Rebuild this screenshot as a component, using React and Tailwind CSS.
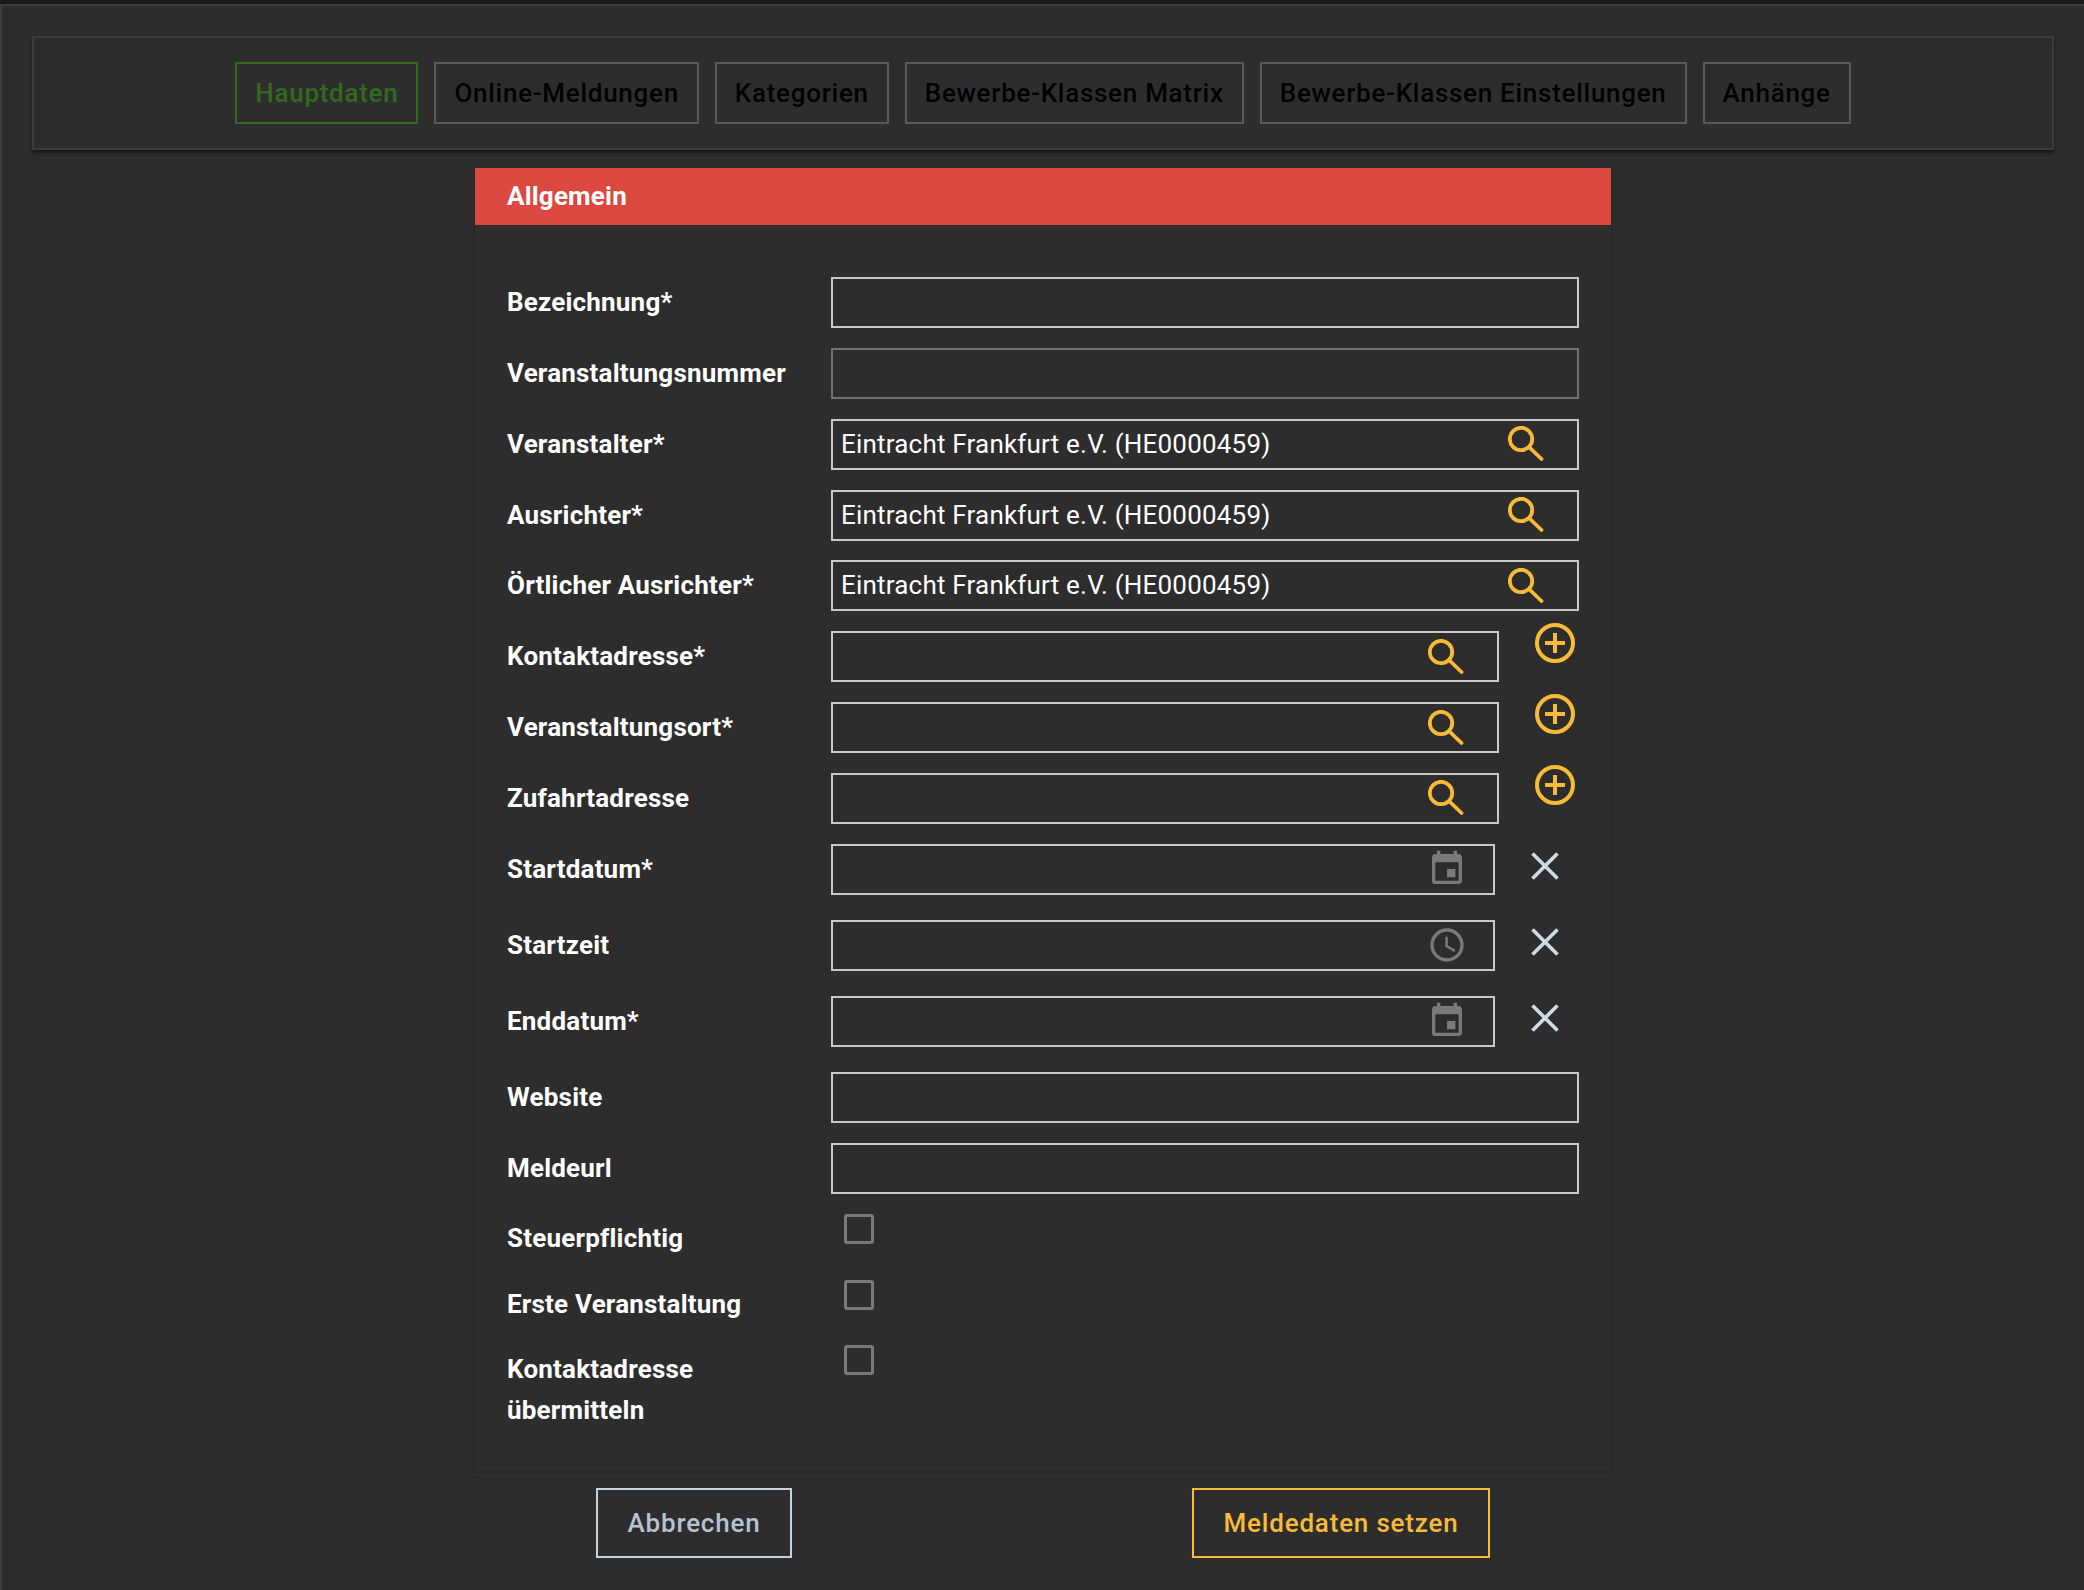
import { MdEvent, MdAccessTime } from "react-icons/md";

const tabs = [
  "Online-Meldungen",
  "Kategorien",
  "Bewerbe-Klassen Matrix",
  "Bewerbe-Klassen Einstellungen",
  "Anhänge",
];

const club = "Eintracht Frankfurt e.V. (HE0000459)";

function SearchIcon() {
  return (
    <svg width="36" height="36" viewBox="0 0 36 36" fill="none" stroke="#f8bb38" strokeWidth="3.8" strokeLinecap="round">
      <circle cx="13" cy="13" r="11.2" />
      <path d="M21.5 21.5L33.5 33" />
    </svg>
  );
}

function PlusIcon() {
  return (
    <svg width="42" height="42" viewBox="0 0 42 42" fill="none" stroke="#f8bb38" strokeWidth="4">
      <circle cx="21" cy="21" r="18" />
      <path d="M21 11v20M11 21h20" />
    </svg>
  );
}

function CloseIcon() {
  return (
    <svg width="30" height="30" viewBox="0 0 30 30" fill="none" stroke="#cfdce6" strokeWidth="3.6">
      <path d="M2.5 2.5l25 25M27.5 2.5l-25 25" />
    </svg>
  );
}

function Label({ children }) {
  return <label className="w-[324px] shrink-0 text-[26px] font-bold leading-[41px] tracking-[0.2px] text-white">{children}</label>;
}

function Box({ value, disabled, children, className }) {
  return (
    <div className={`flex h-[51px] items-center justify-between border-2 pl-[8px] text-[26px] tracking-[0.2px] text-white ${disabled ? "border-[#707070]" : "border-[#c8c8c8]"} ${className}`}>
      <span>{value}</span>
      {children}
    </div>
  );
}

function TextRow({ label, disabled }) {
  return (
    <div className="flex h-[51px] items-center">
      <Label>{label}</Label>
      <Box disabled={disabled} className="w-[748px]" />
    </div>
  );
}

function ClubRow({ label }) {
  return (
    <div className="flex h-[51px] items-center">
      <Label>{label}</Label>
      <Box value={club} className="w-[748px] pr-[33px]">
        <SearchIcon />
      </Box>
    </div>
  );
}

function AddressRow({ label }) {
  return (
    <div className="flex h-[51px] items-center">
      <Label>{label}</Label>
      <Box className="w-[668px] pr-[33px]">
        <SearchIcon />
      </Box>
      <button className="-mt-[27px] ml-[35px]">
        <PlusIcon />
      </button>
    </div>
  );
}

function DateRow({ label, icon }) {
  return (
    <div className="flex h-[51px] items-center">
      <Label>{label}</Label>
      <Box className="w-[664px] pr-[26px]">{icon}</Box>
      <button className="-mt-[7px] ml-[35px]">
        <CloseIcon />
      </button>
    </div>
  );
}

function CheckRow({ children }) {
  return (
    <div className="flex items-start">
      <Label>{children}</Label>
      <div className="ml-[13px] -mt-[4px] size-[30px] rounded-[3px] border-[3px] border-[#7a7a7a]" />
    </div>
  );
}

export default function App() {
  return (
    <div className="min-h-[1590px] bg-[#2d2d2d] font-['Roboto',sans-serif]">
      <div className="h-1 bg-[#1a1a1a]" />
      <div className="h-[1586px] border-t-2 border-l-2 border-[#3c3c3c] pt-[30px] pl-[30px] pr-[30px]">
        <nav className="flex h-[114px] items-center justify-center gap-4 border-2 border-[#3c3c3c] shadow-[0_3px_3px_rgba(0,0,0,0.5)]">
          <a className="flex h-[62px] items-center border-2 border-[#33691e] px-[18px] text-[26px] font-medium tracking-[0.72px] text-[#33691e]">Hauptdaten</a>
          {tabs.map((t) => (
            <a key={t} className="flex h-[62px] items-center border-2 border-[#5a5a5a] px-[18px] text-[26px] font-medium tracking-[0.72px] text-black">{t}</a>
          ))}
        </nav>

        <main className="ml-[443px] mt-[18px] w-[1136px]">
          <section className="-mx-[2px] border-x-2 border-b-2 border-[#282828]">
            <h2 className="flex h-[57px] items-center bg-[#dc4740] pl-[32px] text-[26px] font-bold tracking-[0.2px] text-white">Allgemein</h2>
            <div className="flex flex-col gap-[19.85px] pl-[32px] pt-[52px] pb-[40px]">
              <TextRow label="Bezeichnung*" />
              <TextRow label="Veranstaltungsnummer" disabled />
              <ClubRow label="Veranstalter*" />
              <ClubRow label="Ausrichter*" />
              <ClubRow label="Örtlicher Ausrichter*" />
              <AddressRow label="Kontaktadresse*" />
              <AddressRow label="Veranstaltungsort*" />
              <AddressRow label="Zufahrtadresse" />
              <div className="flex flex-col gap-[25px]">
                <DateRow label="Startdatum*" icon={<MdEvent size={40} className="text-[#7a7a7a]" />} />
                <DateRow label="Startzeit" icon={<MdAccessTime size={40} className="text-[#7a7a7a]" />} />
                <DateRow label="Enddatum*" icon={<MdEvent size={40} className="text-[#7a7a7a]" />} />
                <TextRow label="Website" />
              </div>
              <TextRow label="Meldeurl" />
              <div className="flex flex-col gap-[24.6px] pt-[4.5px]">
                <CheckRow>Steuerpflichtig</CheckRow>
                <CheckRow>Erste Veranstaltung</CheckRow>
                <CheckRow>Kontaktadresse<br />übermitteln</CheckRow>
              </div>
            </div>
          </section>

          <div className="mt-[15px] flex justify-between px-[121px]">
            <button className="h-[70px] w-[196px] border-2 border-[#c5d3df] text-[26px] font-medium tracking-[0.8px] text-[#b5c3d0]">Abbrechen</button>
            <button className="h-[70px] w-[298px] border-2 border-[#f8bb38] text-[26px] font-medium tracking-[0.8px] text-[#f8bb38]">Meldedaten setzen</button>
          </div>
        </main>
      </div>
    </div>
  );
}
